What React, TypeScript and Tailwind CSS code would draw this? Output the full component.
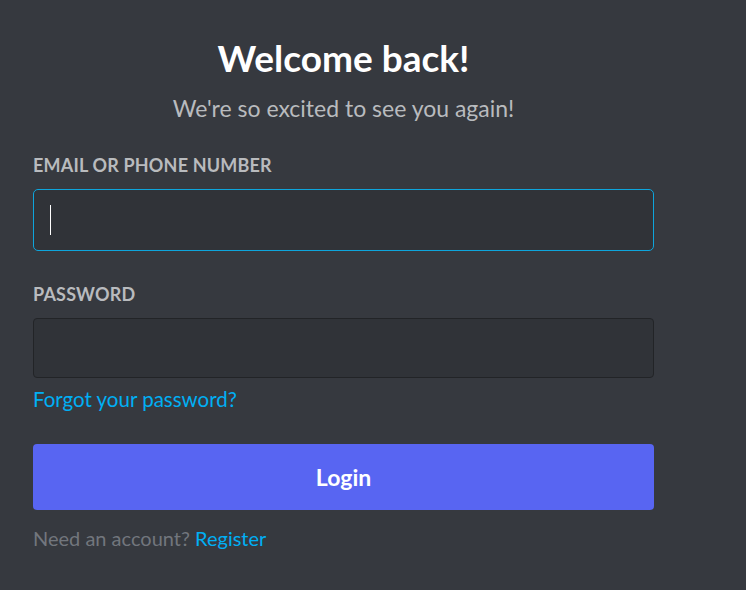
export default function App() {
  return (
    <div
      className="min-h-[590px] w-full bg-[#36393f] pl-[33px] pt-[37px]"
      style={{ fontFamily: 'Lato, "Noto Sans", sans-serif' }}
    >
      <div className="w-[621px]">
        <h1 className="text-center text-[37px] font-bold leading-[42px] text-white">Welcome back!</h1>
        <p className="mt-[14px] text-center text-[23px] leading-[30px] text-[#b9bbbe]">
          We're so excited to see you again!
        </p>

        <form className="mt-[32px]" onSubmit={(e) => e.preventDefault()}>
          <label className="block text-[18px] font-bold uppercase leading-[20px] tracking-[0.01em] text-[#b9bbbe]">
            Email or Phone Number
          </label>
          <div className="mt-[14px] flex h-[62px] items-center rounded-[5px] border border-[#0ea5dc] bg-[#303338] px-[16px]">
            <span className="h-[30px] w-px bg-white" />
          </div>

          <label className="mt-[33px] block text-[18px] font-bold uppercase leading-[20px] tracking-[0.01em] text-[#b9bbbe]">
            Password
          </label>
          <div className="mt-[14px] h-[60px] rounded-[4px] border border-[#222427] bg-[#303338]" />

          <a href="#" className="mt-[9px] block w-fit text-[20.5px] leading-[24px] text-[#00aff4]">
            Forgot your password?
          </a>

          <button
            type="submit"
            className="mt-[33px] h-[66px] w-full rounded-[4px] bg-[#5865f2] text-[23px] font-bold text-white"
          >
            Login
          </button>

          <div className="mt-[16px] text-[20px] leading-[24px] text-[#72767d]">
            Need an account? <a href="#" className="text-[#00aff4]">Register</a>
          </div>
        </form>
      </div>
    </div>
  )
}
